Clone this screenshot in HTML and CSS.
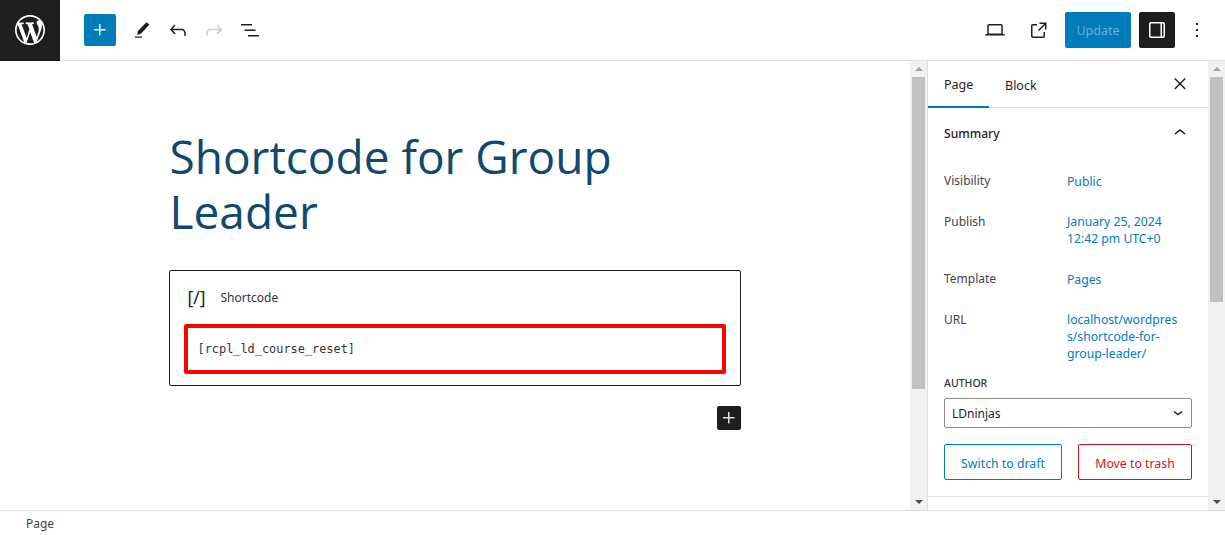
FILE: index.html
```html
<!DOCTYPE html>
<html lang="en">
<head>
  <meta charset="UTF-8" />
  <title>Edit Page</title>
  <link rel="stylesheet" href="styles.css">
</head>
<body>

  <header class="topbar">
    <div class="wp-logo">
      <svg width="36" height="36" viewBox="-2 -2 24 24" fill="#fff"><path d="M20 10c0-5.510-4.490-10-10-10C4.480 0 0 4.490 0 10c0 5.520 4.480 10 10 10 5.510 0 10-4.480 10-10zM7.780 15.370L4.370 6.220c.55-.02 1.170-.08 1.170-.08.50-.06.440-1.130-.06-1.110 0 0-1.450.11-2.370.11-.18 0-.37 0-.58-.01C4.120 2.690 6.870 1.110 10 1.110c2.330 0 4.450.87 6.050 2.340-.68-.11-1.650.39-1.650 1.580 0 .74.450 1.360.90 2.100.35.610.55 1.360.55 2.460 0 1.490-1.400 5-1.400 5l-3.030-8.370c.54-.02.820-.17.820-.17.500-.05.440-1.250-.06-1.220 0 0-1.440.12-2.380.12-.87 0-2.330-.12-2.330-.12-.50-.03-.56 1.200-.06 1.220l.92.080 1.260 3.410zM17.410 10c.24-.64.740-1.870.43-4.250.70 1.290 1.050 2.710 1.050 4.250 0 3.290-1.730 6.240-4.400 7.780.97-2.590 1.940-5.200 2.920-7.780zM6.100 18.090C3.120 16.650 1.110 13.530 1.110 10c0-1.300.23-2.480.72-3.590C3.250 10.300 4.670 14.200 6.100 18.090zm4.030-6.630l2.580 6.980c-.86.290-1.760.450-2.710.450-.79 0-1.570-.11-2.290-.33.810-2.380 1.620-4.740 2.420-7.100z"/></svg>
    </div>
    <div class="tools-left">
      <button class="icon-btn add-btn">
        <svg width="24" height="24" viewBox="0 0 24 24" fill="#fff"><path d="M11 12.500V17.500H12.500V12.500H17.500V11H12.500V6H11V11H6V12.500H11Z"/></svg>
      </button>
      <button class="icon-btn">
        <svg width="24" height="24" viewBox="0 0 24 24" fill="#1e1e1e"><path d="M16.400 4.200L19.400 6.600 11.200 15.600 7.300 16.900 7.700 13.200zM5 18.400h7v1.300H5z"/></svg>
      </button>
      <button class="icon-btn">
        <svg width="24" height="24" viewBox="0 0 24 24" fill="#1e1e1e"><path d="M18.300 11.700c-.6-.6-1.400-.9-2.300-.9H6.700l2.900-3.300-1.100-1-4.500 5L8.500 16.500l1.100-1-2.900-3.300H16c.5 0 .9.200 1.300.5 1 1 1 3.400 1 4.500v.8h1.500v-.8c0-1.500 0-4.300-1.500-5.500z"/></svg>
      </button>
      <button class="icon-btn">
        <svg width="24" height="24" viewBox="0 0 24 24" fill="#ccc"><path d="M15.600 6.500l-1.100 1 2.900 3.300H8c-.9 0-1.700.3-2.300.9-1.400 1.500-1.400 4.200-1.400 5.600v.2h1.500v-.3c0-1.100 0-3.500 1-4.500.3-.3.700-.5 1.300-.5h9.200L14.500 15.500l1.100 1.100 4.600-4.600-4.600-5.500z"/></svg>
      </button>
      <button class="icon-btn">
        <svg width="24" height="24" viewBox="0 0 24 24" fill="#1e1e1e"><path d="M3 6h11v1.500H3V6zm3.500 5.500h11V13h-11v-1.500zM21 17H10v1.500h11V17z"/></svg>
      </button>
    </div>
    <div class="tools-right">
      <button class="icon-btn small">
        <svg width="24" height="24" viewBox="0 0 24 24" fill="#1e1e1e"><path d="M20.500 16h-.7V8c0-1.100-.9-2-2-2H6.200c-1.100 0-2 .9-2 2v8h-.7c-.8 0-1.500.7-1.500 1.500h20c0-.8-.7-1.500-1.500-1.500zM5.700 8c0-.3.200-.5.500-.5h11.600c.3 0 .5.200.5.500v7.600H5.700V8z"/></svg>
      </button>
      <button class="icon-btn small">
        <svg width="24" height="24" viewBox="0 0 24 24" fill="#1e1e1e"><path d="M19.500 4.500h-7V6h4.440l-5.970 6.030 1.060 1.060L18 7.060v4.440h1.500v-7zM6 6h4v1.500H6a.5.500 0 0 0-.5.500v10c0 .3.200.5.500.5h10a.5.500 0 0 0 .5-.5v-4H18v4a2 2 0 0 1-2 2H6a2 2 0 0 1-2-2V8c0-1.100.9-2 2-2z"/></svg>
      </button>
      <button class="update-btn">Update</button>
      <button class="icon-btn settings-btn">
        <svg width="24" height="24" viewBox="0 0 24 24" fill="#fff"><path d="M18 4H6c-1.100 0-2 .9-2 2v12c0 1.100.9 2 2 2h12c1.100 0 2-.9 2-2V6c0-1.100-.9-2-2-2zM5.500 18V6c0-.3.200-.5.500-.5h9.500v13H6c-.3 0-.5-.2-.5-.5zm13 0c0 .3-.2.500-.5.500h-1v-13h1c.3 0 .5.200.5.500v12z"/></svg>
      </button>
      <button class="icon-btn more-btn">
        <svg width="24" height="24" viewBox="0 0 24 24" fill="#1e1e1e"><path d="M13 19h-2v-2h2v2zm0-6h-2v-2h2v2zm0-6h-2V5h2v2z"/></svg>
      </button>
    </div>
  </header>

  <div class="workspace">
    <main class="canvas">
      <div class="page-col">
        <h1 class="page-title">Shortcode for Group Leader</h1>
        <div class="shortcode-block">
          <div class="shortcode-label"><span class="shortcode-icon">[/]</span><span>Shortcode</span></div>
          <div class="shortcode-input">[rcpl_ld_course_reset]</div>
        </div>
        <button class="block-add">
          <svg width="24" height="24" viewBox="0 0 24 24" fill="#ddd"><path d="M11 12.500V17.500H12.500V12.500H17.500V11H12.500V6H11V11H6V12.500H11Z"/></svg>
        </button>
      </div>
    </main>
    <div class="scrollbar">
      <span class="arrow-up"></span>
      <div class="track"><div class="thumb thumb-main"></div></div>
      <span class="arrow-down"></span>
    </div>

    <aside class="sidebar">
      <div class="tabs">
        <span class="tab active">Page</span>
        <span class="tab">Block</span>
        <svg class="tab-close" width="24" height="24" viewBox="0 0 24 24" fill="#1e1e1e"><path d="M13 11.800l4.700-4.700-1-1-4.700 4.700-4.700-4.700-1 1 4.700 4.700-4.700 4.700 1 1 4.700-4.700 4.700 4.700 1-1z"/></svg>
      </div>
      <section class="summary">
        <div class="summary-head">
          <span>Summary</span>
          <svg width="24" height="24" viewBox="0 0 24 24" fill="#1e1e1e"><path d="M6.500 12.400L12 8l5.500 4.400-.9 1.200L12 10l-4.500 3.600z"/></svg>
        </div>
        <div class="meta-row row-visibility"><span class="meta-key">Visibility</span><a class="meta-val">Public</a></div>
        <div class="meta-row row-publish"><span class="meta-key">Publish</span><a class="meta-val">January 25, 2024<br>12:42 pm UTC+0</a></div>
        <div class="meta-row row-template"><span class="meta-key">Template</span><a class="meta-val">Pages</a></div>
        <div class="meta-row row-url"><span class="meta-key">URL</span><a class="meta-val">localhost/wordpres<br>s/shortcode-for-<br>group-leader/</a></div>
        <div class="author-label">AUTHOR</div>
        <div class="author-select">
          <span>LDninjas</span>
          <svg width="12" height="12" viewBox="0 0 12 12" fill="none" stroke="#1e1e1e" stroke-width="1.500"><path d="M2 4.500l4 3 4-3"/></svg>
        </div>
        <div class="summary-actions">
          <button class="outline-btn draft">Switch to draft</button>
          <button class="outline-btn trash">Move to trash</button>
        </div>
      </section>
    </aside>
    <div class="scrollbar">
      <span class="arrow-up"></span>
      <div class="track"><div class="thumb thumb-side"></div></div>
      <span class="arrow-down"></span>
    </div>
  </div>

  <footer class="statusbar">Page</footer>

</body>
</html>
```

FILE: styles.css
```css
* {
  box-sizing: border-box;
}
html, body {
  height: 100%;
}
body {
  margin: 0;
  display: flex;
  flex-direction: column;
  height: 535px;
  overflow: hidden;
  background: #fff;
  color: #1e1e1e;
  font-family: "Noto Sans", sans-serif;
  font-size: 13px;
}
button {
  font-family: inherit;
  border: none;
  background: none;
  padding: 0;
  cursor: pointer;
}

/* barra superior */
.topbar {
  display: flex;
  align-items: center;
  height: 61px;
  flex: none;
  border-bottom: 1px solid #e0e0e0;
}
.wp-logo {
  width: 60px;
  height: 61px;
  background: #1e1e1e;
  display: flex;
  align-items: center;
  justify-content: center;
}
.icon-btn {
  display: flex;
  align-items: center;
  justify-content: center;
  width: 36px;
  height: 36px;
  border-radius: 2px;
}
.tools-left {
  display: flex;
  align-items: center;
  margin-left: 24px;
}
.add-btn {
  width: 32px;
  height: 32px;
  background: #007cba;
  margin-right: 8px;
}
.tools-right {
  display: flex;
  align-items: center;
  margin-left: auto;
  padding-right: 16px;
}
.tools-right .small {
  margin-right: 8px;
}
.update-btn {
  width: 66px;
  height: 36px;
  background: #007cba;
  color: #66b0d6;
  font-size: 12.500px;
  border-radius: 2px;
}
.settings-btn {
  background: #1e1e1e;
  margin-left: 8px;
}
.more-btn {
  width: 24px;
  margin-left: 10px;
}

/* area de trabalho */
.workspace {
  flex: 1;
  display: flex;
  min-height: 0;
}
.canvas {
  flex: 1;
  display: flex;
  justify-content: center;
  min-width: 0;
}
.page-col {
  width: 572px;
  margin-left: -1px;
  padding-top: 68px;
}
.page-title {
  margin: 0 0 31px;
  padding-left: 1px;
  font-family: "Open Sans", sans-serif;
  font-size: 46px;
  font-weight: 400;
  line-height: 55px;
  color: #0f4a6e;
}
.shortcode-block {
  height: 116px;
  border: 1px solid #1e1e1e;
  border-radius: 2px;
  padding: 14px 14px;
}
.shortcode-label {
  display: flex;
  align-items: center;
  gap: 15px;
  height: 24px;
  padding-left: 4px;
  font-size: 12px;
  color: #333;
}
.shortcode-icon {
  font-size: 17.500px;
  color: #1e1e1e;
}
.shortcode-input {
  display: flex;
  align-items: center;
  height: 50px;
  margin-top: 15px;
  padding-left: 10px;
  padding-bottom: 1px;
  border: 4px solid #f00;
  border-radius: 2px;
  font-family: "DejaVu Sans Mono", monospace;
  font-size: 11.900px;
  color: #333;
}
.block-add {
  display: flex;
  align-items: center;
  justify-content: center;
  width: 24px;
  height: 24px;
  margin: 20px 0 0 auto;
  background: #1e1e1e;
  border-radius: 2px;
}

/* scrollbars falsas */
.scrollbar {
  width: 17px;
  flex: none;
  display: flex;
  flex-direction: column;
  align-items: center;
  background: #f1f1f1;
  padding: 6px 0;
}
.track {
  flex: 1;
  width: 100%;
  padding: 6px 2px 0;
}
.thumb {
  width: 100%;
  background: #c1c1c1;
}
.thumb-main {
  height: 312px;
}
.thumb-side {
  height: 225px;
}
.arrow-up, .arrow-down {
  width: 0;
  height: 0;
  border-left: 4px solid transparent;
  border-right: 4px solid transparent;
}
.arrow-up {
  border-bottom: 4px solid #a3a3a3;
}
.arrow-down {
  border-top: 4px solid #505050;
}

/* painel lateral */
.sidebar {
  width: 281px;
  flex: none;
  border-left: 1px solid #e0e0e0;
}
.tabs {
  display: flex;
  align-items: center;
  height: 47px;
  border-bottom: 1px solid #e0e0e0;
}
.tab {
  display: flex;
  align-items: center;
  height: 47px;
  padding: 3px 16px 0;
  font-size: 12.500px;
}
.tab.active {
  width: 61px;
  padding-top: 2px;
  border-bottom: 2px solid #007cba;
}
.tab-close {
  margin-left: auto;
  margin-right: 16px;
  margin-top: -1px;
}
.summary {
  height: 389px;
  padding: 0 16px;
  border-bottom: 1px solid #e0e0e0;
}
.summary-head {
  display: flex;
  align-items: center;
  justify-content: space-between;
  height: 50px;
  font-weight: 500;
  font-size: 12.100px;
}
.meta-row {
  display: flex;
  font-size: 12px;
  line-height: 17px;
}
.meta-key {
  width: 123px;
  color: #444;
}
.meta-val {
  color: #007cba;
  font-size: 12.200px;
}
.row-visibility {
  margin-top: 15px;
}
.row-visibility .meta-key {
  margin-top: -1px;
}
.row-publish {
  margin-top: 23px;
}
.row-template {
  margin-top: 23px;
}
.row-template .meta-val {
  margin-top: 1px;
  margin-bottom: -1px;
}
.row-url {
  margin-top: 24px;
}
.author-label {
  margin-top: 13px;
  font-size: 10.500px;
  font-weight: 500;
  line-height: 16px;
  color: #333;
}
.author-select {
  display: flex;
  align-items: center;
  justify-content: space-between;
  height: 30px;
  margin-top: 7px;
  padding: 0 7px;
  border: 1px solid #8c8c8c;
  border-radius: 2px;
  font-size: 12px;
}
.summary-actions {
  display: flex;
  justify-content: space-between;
  margin-top: 16px;
}
.outline-btn {
  height: 36px;
  padding-top: 2px;
  font-size: 12.300px;
  border-radius: 2px;
}
.draft {
  width: 118px;
  color: #007cba;
  border: 1px solid #007cba;
}
.trash {
  width: 114px;
  color: #cc1818;
  border: 1px solid #cc1818;
}

.statusbar {
  height: 25px;
  flex: none;
  display: flex;
  align-items: center;
  padding-left: 26px;
  border-top: 1px solid #e0e0e0;
  font-size: 12px;
  color: #444;
}
```
